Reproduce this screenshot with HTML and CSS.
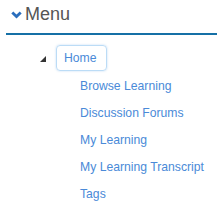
FILE: index.html
```html
<!DOCTYPE html>
<html lang="en">
<head>
  <title>Menu</title>
  <meta charset="UTF-8">
  <link rel="stylesheet" href="styles.css">
</head>
<body>
<div class="menu-head">
  <svg class="chevron" width="11" height="8" viewBox="0 0 11 8">
    <path d="M1.3 1.5 L5.5 5.6 L9.7 1.5" fill="none" stroke="#2a6ebd" stroke-width="2.8"/>
  </svg>
  <span class="menu-title">Menu</span>
</div>

<ul class="tree">
  <li class="root">
    <svg class="expander" width="6" height="6" viewBox="0 0 6 6">
      <path d="M6 0 L6 6 L0 6 Z" fill="#333"/>
    </svg>
    <a class="node selected" href="#">Home</a>
  </li>
  <li><a class="node" href="#">Browse Learning</a></li>
  <li><a class="node" href="#">Discussion Forums</a></li>
  <li><a class="node" href="#">My Learning</a></li>
  <li><a class="node" href="#">My Learning Transcript</a></li>
  <li><a class="node" href="#">Tags</a></li>
</ul>
</body>
</html>
```

FILE: styles.css
```css
body {
  margin: 0;
  background: #fff;
  font-family: "Liberation Sans", Arial, sans-serif;
}

.menu-head {
  display: flex;
  align-items: center;
  margin-left: 6px;
  padding-left: 5px;
  border-bottom: 2px solid #1570a6;
  box-sizing: border-box;
  height: 35px;
  padding-bottom: 4px;
}

.chevron {
  display: block;
  margin-top: 1px;
  margin-right: 3px;
}

.menu-title {
  font-size: 18px;
  color: #555;
}

.tree {
  list-style: none;
  margin: 10px 0 0 0;
  padding: 0;
}

.tree li {
  padding-left: 80px;
  height: 27px;
  line-height: 27px;
}

.tree li.root {
  display: flex;
  align-items: center;
  padding-left: 40px;
  height: 26px;
  line-height: 14px;
}

.expander {
  display: block;
  margin-right: 10px;
  margin-top: 1px;
}

.node {
  font-size: 12.2px;
  color: #4a8ad8;
  text-decoration: none;
}

.node.selected {
  padding: 5px 9px 5px 7px;
  border: 1px solid #bcdcf6;
  border-radius: 4px;
  box-shadow: 0 0 2px rgba(120, 180, 235, 0.5);
}
```
